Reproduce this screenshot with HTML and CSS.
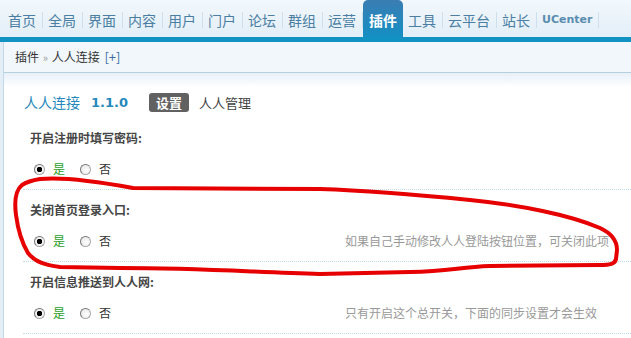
FILE: index.html
```html
<!DOCTYPE html>
<html lang="zh-CN">
<head>
    <meta charset="UTF-8">
    <title>插件 - 人人连接</title>
    <link rel="stylesheet" href="styles.css">
</head>
<body>
    <div class="nav">
        <a href="#">首页</a>
        <a href="#">全局</a>
        <a href="#">界面</a>
        <a href="#">内容</a>
        <a href="#">用户</a>
        <a href="#">门户</a>
        <a href="#">论坛</a>
        <a href="#">群组</a>
        <a href="#">运营</a>
        <a href="#" class="active">插件</a>
        <a href="#">工具</a>
        <a href="#">云平台</a>
        <a href="#">站长</a>
        <a href="#" class="uc">UCenter</a>
    </div>
    <div class="bar"></div>

    <div class="main">
        <div class="crumb">
            插件 <span class="raquo">&raquo;</span> 人人连接 <a href="#" class="add">[+]</a>
        </div>

        <div class="content">
            <div class="title">
                <span class="name">人人连接</span>
                <span class="ver">1.1.0</span>
                <span class="badge">设置</span>
                <span class="sub">人人管理</span>
            </div>

            <div class="setting">
                <div class="label">开启注册时填写密码:</div>
                <div class="row">
                    <div class="opts">
                        <span class="radio checked"></span><span class="yes">是</span>
                        <span class="radio"></span><span class="no">否</span>
                    </div>
                    <div class="tip"></div>
                </div>
            </div>

            <div class="setting">
                <div class="label">关闭首页登录入口:</div>
                <div class="row">
                    <div class="opts">
                        <span class="radio checked"></span><span class="yes">是</span>
                        <span class="radio"></span><span class="no">否</span>
                    </div>
                    <div class="tip">如果自己手动修改人人登陆按钮位置，可关闭此项</div>
                </div>
            </div>

            <div class="setting">
                <div class="label">开启信息推送到人人网:</div>
                <div class="row">
                    <div class="opts">
                        <span class="radio checked"></span><span class="yes">是</span>
                        <span class="radio"></span><span class="no">否</span>
                    </div>
                    <div class="tip">只有开启这个总开关，下面的同步设置才会生效</div>
                </div>
            </div>
        </div>

        <!-- red hand-drawn mark over the second setting -->
        <svg class="mark" width="631" height="338" viewBox="0 0 631 338">
            <path d="M40,179 C60,177 90,180 133,188 L320,189 C380,191 430,196 470,200 C520,205 570,215 600,228 C613,234 617,242 617,250 L616,259 C615,264 610,265 600,265 L490,266 C460,267 450,271 410,272 L320,274 C250,272 200,268 120,268 L60,267 C45,265 35,262 28,253 C22,243 18,230 16,215 C14,200 16,190 22,185 C28,181 34,180 40,179 Z"
                  fill="none" stroke="#e60000" stroke-width="4" stroke-linejoin="round"/>
        </svg>
    </div>
</body>
</html>
```

FILE: styles.css
```css
body {
    margin: 0;
    font-family: "Noto Sans CJK SC", "DejaVu Sans", sans-serif;
    font-size: 12px;
    color: #333;
    background-color: #e4eef6;
    overflow: hidden;
}
a {
    text-decoration: none;
}
.nav {
    display: flex;
    height: 37px;
    padding-left: 3px;
    background: linear-gradient(#f2f8fc, #e3eef7);
}
.nav a {
    height: 37px;
    padding: 3px 7px 0 5px;
    box-sizing: border-box;
    line-height: 34px;
    font-size: 14px;
    color: #4a7ea3;
    background: linear-gradient(#cddfeb, #cddfeb) right 12px / 1px 16px no-repeat;
}
.nav a.active {
    padding: 3px 6px 0 6px;
    color: #fff;
    font-weight: bold;
    border-radius: 5px 5px 0 0;
    background: linear-gradient(#3a7db3, #148fc3);
}
.nav a.uc {
    font-family: "DejaVu Sans", sans-serif;
    font-size: 11px;
    font-weight: bold;
    color: #5a8db0;
}
.bar {
    height: 5px;
    background-color: #1192c2;
}
.main {
    position: relative;
    margin-left: 3px;
    border-left: 1px solid #c3d7e6;
    background-color: #fff;
    height: 296px;
}
.crumb {
    height: 30px;
    line-height: 30px;
    padding-left: 11px;
    background-color: #f1f7fb;
    border-bottom: 1px solid #b6cfdd;
    color: #333;
}
.raquo {
    color: #999;
    font-size: 11px;
    margin: 0 1px;
}
.add {
    color: #3d6fa6;
    margin-left: 2px;
    font-size: 13px;
}
.content {
    padding: 19px 0 0 19px;
    background: linear-gradient(#e7f0f7, #fff 14px) no-repeat;
}
.title {
    display: flex;
    align-items: center;
    height: 20px;
    padding-left: 1px;
    margin-bottom: 6px;
}
.name {
    font-size: 14px;
    color: #2589bb;
}
.ver {
    font-family: "DejaVu Sans", sans-serif;
    font-size: 13px;
    font-weight: bold;
    color: #2589bb;
    margin-left: 11px;
}
.badge {
    margin-left: 21px;
    width: 40px;
    height: 19px;
    line-height: 19px;
    text-align: center;
    border-radius: 3px;
    background-color: #616161;
    color: #fff;
    font-size: 13px;
    font-weight: bold;
}
.sub {
    margin-left: 10px;
    font-size: 13px;
    color: #444;
}
.setting {
    border-bottom: 1px dotted #c4dbe8;
}
.label {
    padding: 10px 0 0 7px;
    height: 20px;
    line-height: 20px;
    font-weight: bold;
    color: #464646;
}
.row {
    display: grid;
    grid-template-columns: 322px 1fr;
    padding: 11px 0 10px;
    line-height: 20px;
}
.opts {
    display: flex;
    align-items: center;
    padding-left: 11px;
}
.radio {
    width: 9px;
    height: 9px;
    border: 1px solid #a9a9a9;
    border-top-color: #777;
    border-left-color: #777;
    border-radius: 50%;
    background: radial-gradient(circle at 65% 65%, #fff, #e3e3e3);
    margin-right: 8px;
}
.radio.checked {
    background: radial-gradient(circle, #000 2.5px, #f6f6f6 3px, #e3e3e3);
}
.yes {
    color: #2a9e2a;
    margin-right: 15px;
}
.no {
    color: #333;
}
.tip {
    color: #999;
}
.mark {
    position: absolute;
    left: -4px;
    top: -42px;
    pointer-events: none;
}
```
